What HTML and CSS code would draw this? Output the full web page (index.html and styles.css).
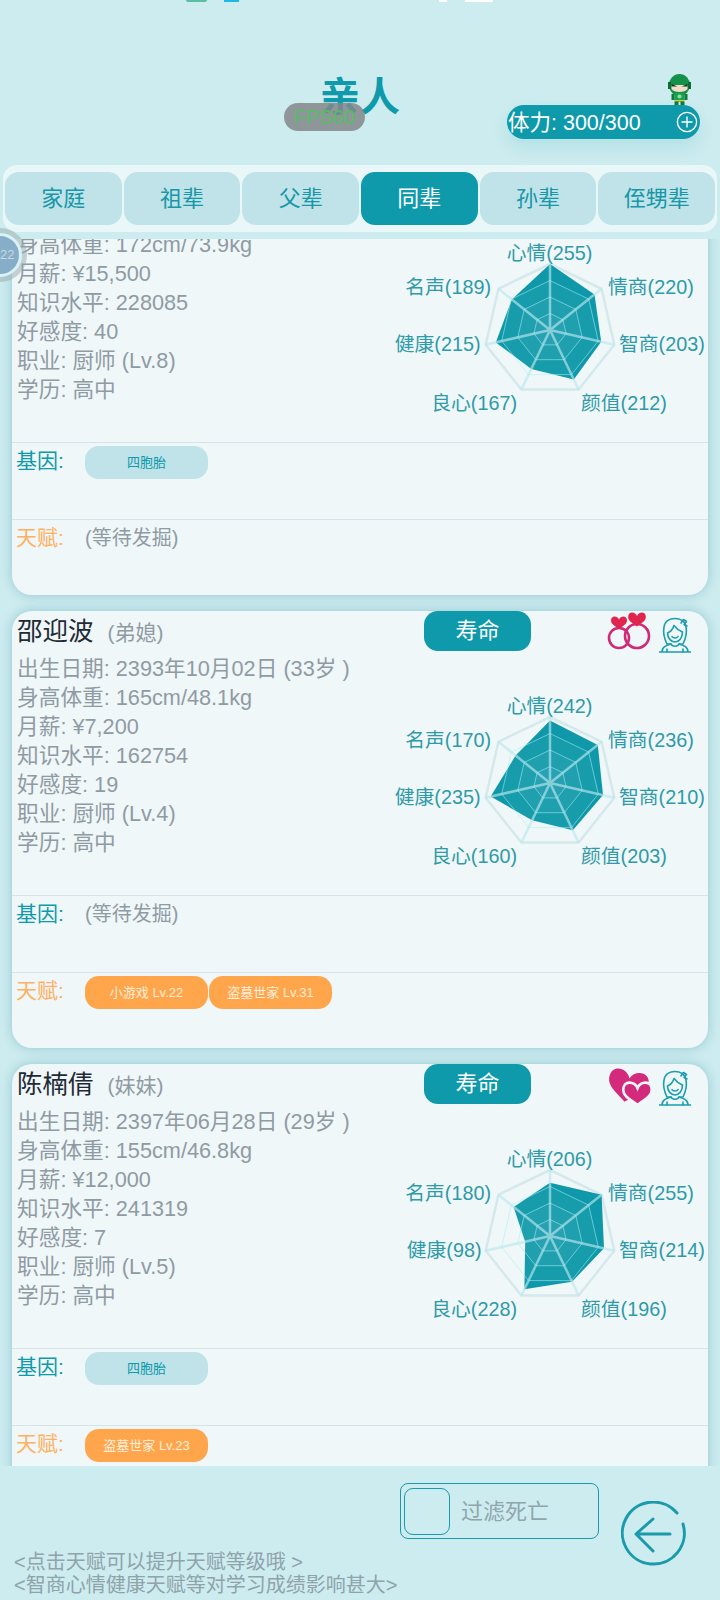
FILE: index.html
```html
<!DOCTYPE html>
<html lang="zh">
<head>
    <meta charset="UTF-8">
    <meta name="viewport" content="width=device-width, initial-scale=1.0">
    <title>亲人</title>
    <link rel="stylesheet" href="styles.css">
</head>
<body>

    <svg class="defs" width="0" height="0">
        <symbol id="radarOuter" viewBox="-66 -66 132 132" overflow="visible">
            <polygon class="ring-outer" points="0,-66 51.6,-41.2 64.3,14.7 28.6,59.5 -28.6,59.5 -64.3,14.7 -51.6,-41.2"/>
        </symbol>
        <g id="radarGrid">
            <polygon class="ring" points="0,-49.5 38.7,-30.9 48.3,11 21.5,44.6 -21.5,44.6 -48.3,11 -38.7,-30.9"/>
            <polygon class="ring" points="0,-33 25.8,-20.6 32.2,7.3 14.3,29.7 -14.3,29.7 -32.2,7.3 -25.8,-20.6"/>
            <polygon class="ring" points="0,-16.5 12.9,-10.3 16.1,3.7 7.2,14.9 -7.2,14.9 -16.1,3.7 -12.9,-10.3"/>
            <path class="spoke" d="M0 0L0 -66M0 0L51.6 -41.2M0 0L64.3 14.7M0 0L28.6 59.5M0 0L-28.6 59.5M0 0L-64.3 14.7M0 0L-51.6 -41.2"/>
        </g>
        <symbol id="heart" viewBox="-8 -2 16 14" overflow="visible">
            <path d="M0 2.500C-1.500 -1.500 -8 -2 -8 3.500C-8 7.500 -3 9.500 0 12C3 9.500 8 7.500 8 3.500C8 -2 1.500 -1.500 0 2.500Z"/>
        </symbol>
        <symbol id="woman" viewBox="0 0 32 36">
            <g fill="none" stroke="#1a9eaf" stroke-width="1.600" stroke-linecap="round" stroke-linejoin="round">
                <path d="M8 27C5 21 4 15 5 10C6 4 11 1.500 16 1.500C21 1.500 26 4 27 10C28 15 27 21 24 27H20"/>
                <path d="M8 27H12"/>
                <path d="M8.500 16C11 15 14 12 15 8.500C18 12.500 21 14 23.500 15C23.500 21 20 25 16 25C12 25 8.500 21 8.500 16Z"/>
                <path d="M13 19.500C14 21.500 18 21.500 19 19.500"/>
                <path d="M0.500 35H31.500M3 35C3 30 7 28.500 12 27C13 30 19 30 20 27C25 28.500 29 30 29 35"/>
                <path d="M8 35V32M24 35V32"/>
                <path d="M22 6L24.500 2.500L27.500 4.500L25 7.500L28 9"/>
            </g>
        </symbol>
    </svg>

    <div class="status-bits">
        <span class="bit bit-green"></span>
        <span class="bit bit-blue"></span>
        <span class="bit bit-white"></span>
        <span class="bit bit-white-long"></span>
    </div>

    <div class="header">
        <div></div>
        <h1 class="title">亲人</h1>
        <div class="energy-box">
            <svg class="hero" viewBox="0 0 24 31">
                <ellipse cx="12" cy="11" rx="10.500" ry="11" fill="#14924a"/>
                <rect x="0.500" y="8" width="3" height="7" fill="#0c6b36"/>
                <rect x="20.500" y="8" width="3" height="7" fill="#0c6b36"/>
                <path d="M4 11H20V15C18 19 6 19 4 15Z" fill="#f4ddc8"/>
                <path d="M4 10L10 12.500H4ZM20 10L14 12.500H20Z" fill="#0b3d22"/>
                <rect x="7" y="19" width="10" height="9" rx="2" fill="#17a350"/>
                <circle cx="12" cy="22.500" r="2" fill="#8fe0a0"/>
                <rect x="4" y="20" width="3" height="6" fill="#0e7a3c"/>
                <rect x="17" y="20" width="3" height="6" fill="#0e7a3c"/>
                <rect x="7" y="26" width="10" height="1.500" fill="#e6c63c"/>
                <rect x="7" y="27.500" width="4" height="3.500" fill="#0e7a3c"/>
                <rect x="13" y="27.500" width="4" height="3.500" fill="#0e7a3c"/>
            </svg>
            <div class="energy">
                <span class="energy-text">体力: 300/300</span>
                <svg class="plus" viewBox="0 0 24 24">
                    <circle cx="12" cy="12" r="10.500"/>
                    <path d="M12 6V18M6 12H18"/>
                </svg>
            </div>
        </div>
        <div class="fps">FPS60</div>
    </div>

    <div class="tabs">
        <div class="tab">家庭</div>
        <div class="tab">祖辈</div>
        <div class="tab">父辈</div>
        <div class="tab active">同辈</div>
        <div class="tab">孙辈</div>
        <div class="tab">侄甥辈</div>
    </div>

    <div class="level-badge"><div class="level-inner">22</div></div>

    <div class="list">

        <div class="card first">
            <div class="card-body">
                <div class="info scrolled">
                    <div>身高体重: 172cm/73.9kg</div>
                    <div>月薪: ¥15,500</div>
                    <div>知识水平: 228085</div>
                    <div>好感度: 40</div>
                    <div>职业: 厨师 (Lv.8)</div>
                    <div>学历: 高中</div>
                </div>
                <svg class="radar" viewBox="0 0 328 243">
                    <g transform="translate(170 130)">
                        <use href="#radarOuter" x="-66" y="-66" width="132" height="132"/>
                        <polygon class="data" points="0,-66 44.5,-35.5 51.2,11.7 23.8,49.5 -18.7,38.9 -54.2,12.4 -38.2,-30.5"/>
                        <use href="#radarGrid"/>
                    </g>
                    <text x="169.500" y="60" text-anchor="middle">心情(255)</text>
                    <text x="228" y="94">情商(220)</text>
                    <text x="239" y="151">智商(203)</text>
                    <text x="201" y="210">颜值(212)</text>
                    <text x="137" y="210" text-anchor="end">良心(167)</text>
                    <text x="100.500" y="151" text-anchor="end">健康(215)</text>
                    <text x="111" y="94" text-anchor="end">名声(189)</text>
                </svg>
            </div>
            <div class="row">
                <div class="row-label gene">基因:</div>
                <div class="chips"><span class="chip chip-gene">四胞胎</span></div>
            </div>
            <div class="row">
                <div class="row-label talent">天赋:</div>
                <div class="row-empty">(等待发掘)</div>
            </div>
        </div>

        <div class="card">
            <div class="card-head">
                <div class="name">邵迎波<span class="relation">(弟媳)</span></div>
                <div class="life-btn">寿命</div>
                <div class="head-icons">
                    <svg class="rel-icon" viewBox="0 0 44 38">
                        <g fill="none" stroke="#cf2a78" stroke-width="2.600">
                            <circle cx="11" cy="24" r="10"/>
                            <circle cx="29" cy="22" r="12"/>
                        </g>
                        <use href="#heart" x="3" y="1" width="16" height="14" fill="#e0264f"/>
                        <use href="#heart" x="20" y="-3" width="18" height="15.500" fill="#e0264f"/>
                    </svg>
                    <svg class="woman-icon"><use href="#woman"/></svg>
                </div>
            </div>
            <div class="card-body">
                <div class="info">
                    <div>出生日期: 2393年10月02日 (33岁 )</div>
                    <div>身高体重: 165cm/48.1kg</div>
                    <div>月薪: ¥7,200</div>
                    <div>知识水平: 162754</div>
                    <div>好感度: 19</div>
                    <div>职业: 厨师 (Lv.4)</div>
                    <div>学历: 高中</div>
                </div>
                <svg class="radar" viewBox="0 0 328 243">
                    <g transform="translate(170 130)">
                        <use href="#radarOuter" x="-66" y="-66" width="132" height="132"/>
                        <polygon class="data" points="0,-62.6 47.8,-38.1 53,12.1 22.8,47.3 -18,37.3 -59.3,13.5 -34.4,-27.4"/>
                        <use href="#radarGrid"/>
                    </g>
                    <text x="169.500" y="60" text-anchor="middle">心情(242)</text>
                    <text x="228" y="94">情商(236)</text>
                    <text x="239" y="151">智商(210)</text>
                    <text x="201" y="210">颜值(203)</text>
                    <text x="137" y="210" text-anchor="end">良心(160)</text>
                    <text x="100.500" y="151" text-anchor="end">健康(235)</text>
                    <text x="111" y="94" text-anchor="end">名声(170)</text>
                </svg>
            </div>
            <div class="row">
                <div class="row-label gene">基因:</div>
                <div class="row-empty">(等待发掘)</div>
            </div>
            <div class="row">
                <div class="row-label talent">天赋:</div>
                <div class="chips">
                    <span class="chip chip-talent">小游戏 Lv.22</span>
                    <span class="chip chip-talent">盗墓世家 Lv.31</span>
                </div>
            </div>
        </div>

        <div class="card">
            <div class="card-head">
                <div class="name">陈楠倩<span class="relation">(妹妹)</span></div>
                <div class="life-btn">寿命</div>
                <div class="head-icons">
                    <svg class="rel-icon" viewBox="0 0 44 38">
                        <use href="#heart" x="0" y="0" width="40" height="35" fill="#d32a7c" transform="rotate(12 20 18)"/>
                        <use href="#heart" x="15" y="13" width="29" height="25" fill="#d32a7c" stroke="#eff7f9" stroke-width="1.500"/>
                    </svg>
                    <svg class="woman-icon"><use href="#woman"/></svg>
                </div>
            </div>
            <div class="card-body">
                <div class="info">
                    <div>出生日期: 2397年06月28日 (29岁 )</div>
                    <div>身高体重: 155cm/46.8kg</div>
                    <div>月薪: ¥12,000</div>
                    <div>知识水平: 241319</div>
                    <div>好感度: 7</div>
                    <div>职业: 厨师 (Lv.5)</div>
                    <div>学历: 高中</div>
                </div>
                <svg class="radar" viewBox="0 0 328 243">
                    <g transform="translate(170 130)">
                        <use href="#radarOuter" x="-66" y="-66" width="132" height="132"/>
                        <polygon class="data" points="0,-53.3 51.6,-41.2 54,12.3 22,45.7 -25.6,53.2 -24.8,5.7 -36.4,-29.1"/>
                        <use href="#radarGrid"/>
                    </g>
                    <text x="169.500" y="60" text-anchor="middle">心情(206)</text>
                    <text x="228" y="94">情商(255)</text>
                    <text x="239" y="151">智商(214)</text>
                    <text x="201" y="210">颜值(196)</text>
                    <text x="137" y="210" text-anchor="end">良心(228)</text>
                    <text x="101.500" y="151" text-anchor="end">健康(98)</text>
                    <text x="111" y="94" text-anchor="end">名声(180)</text>
                </svg>
            </div>
            <div class="row">
                <div class="row-label gene">基因:</div>
                <div class="chips"><span class="chip chip-gene">四胞胎</span></div>
            </div>
            <div class="row">
                <div class="row-label talent">天赋:</div>
                <div class="chips"><span class="chip chip-talent">盗墓世家 Lv.23</span></div>
            </div>
        </div>

    </div>

    <div class="footer">
        <div class="hints">
            <div>&lt;点击天赋可以提升天赋等级哦 &gt;</div>
            <div>&lt;智商心情健康天赋等对学习成绩影响甚大&gt;</div>
        </div>
        <div class="filter">
            <span class="check"></span>
            <span class="filter-text">过滤死亡</span>
        </div>
        <svg class="back" viewBox="0 0 66 66">
            <path d="M56 12A31 31 0 1 0 62 23"/>
            <path d="M49 33H15M32 18L15 33L32 50"/>
        </svg>
    </div>

</body>
</html>
```

FILE: styles.css
```css
* {
    box-sizing: border-box;
}
body {
    margin: 0;
    width: 720px;
    height: 1600px;
    overflow: hidden;
    position: relative;
    font-family: "Liberation Sans", "Noto Sans CJK SC", sans-serif;
    background-color: #cdecef;
    color: #8f9ba3;
}
.defs {
    position: absolute;
}
.status-bits {
    display: flex;
    height: 2px;
    padding-left: 186px;
}
.bit {
    display: block;
    height: 2px;
}
.bit-green {
    width: 21px;
    background: #5cc0a0;
    border-radius: 0 0 6px 6px;
}
.bit-blue {
    width: 15px;
    margin-left: 17px;
    background: #1fb6e8;
}
.bit-white {
    width: 8px;
    margin-left: 200px;
    background: #fff;
}
.bit-white-long {
    width: 28px;
    margin-left: 18px;
    background: #fff;
}

.header {
    position: relative;
    display: grid;
    grid-template-columns: 1fr auto 1fr;
    height: 163px;
}
.title {
    margin: 71px 0 0;
    font-size: 40px;
    line-height: 48px;
    font-weight: 700;
    color: #0e9aab;
}
.energy-box {
    justify-self: end;
    display: flex;
    flex-direction: column;
    align-items: flex-end;
    margin: 72px 20px 0 0;
}
.hero {
    display: block;
    width: 25px;
    height: 31px;
    margin-right: 8px;
}
.energy {
    display: flex;
    align-items: center;
    justify-content: space-between;
    width: 193px;
    height: 34px;
    padding: 0 2px 0 1px;
    border-radius: 17px;
    background: #0e9aab;
    color: #fff;
    font-size: 21.5px;
    box-shadow: 0 8px 18px rgba(14, 154, 171, 0.14);
}
.energy-text {
    padding-bottom: 3px;
}
.plus {
    width: 22px;
    height: 22px;
    fill: none;
    stroke: #fff;
    stroke-width: 1.5;
}
.fps {
    position: absolute;
    left: 284px;
    top: 101px;
    width: 81px;
    height: 28px;
    border-radius: 14px;
    background: rgba(130, 135, 138, 0.85);
    color: #58bb68;
    font-size: 20px;
    line-height: 28px;
    text-align: center;
}

.tabs {
    display: flex;
    gap: 2px;
    height: 67px;
    margin: 0 3px;
    padding: 7px 2px;
    border-radius: 14px;
    background: #eaf7f8;
}
.tab {
    flex: 1;
    display: flex;
    align-items: center;
    justify-content: center;
    padding-bottom: 5px;
    border-radius: 14px;
    background: #bfe3e8;
    color: #1797a8;
    font-size: 22px;
}
.tab.active {
    background: #0e9aab;
    color: #fff;
}

.level-badge {
    position: absolute;
    left: -27px;
    top: 228px;
    z-index: 2;
    display: flex;
    align-items: center;
    justify-content: center;
    width: 54px;
    height: 54px;
    border-radius: 50%;
    background: rgba(150, 170, 175, 0.5);
}
.level-inner {
    width: 44px;
    height: 44px;
    padding-left: 19px;
    border: 3px solid #d9f2f6;
    border-radius: 50%;
    background: #86aec8;
    color: #c4d9e4;
    font-size: 13px;
    line-height: 38px;
    white-space: nowrap;
}

.list {
    height: 1227px;
    margin-top: 7px;
    padding: 0 12px;
    overflow: hidden;
}
.card {
    height: 437px;
    margin-bottom: 16px;
    border-radius: 20px;
    background: #eff7f9;
    box-shadow: 0 0 12px rgba(14, 120, 140, 0.3);
}
.card.first {
    margin-top: -81px;
    padding-top: 42px;
}
.card-head {
    display: flex;
    height: 42px;
}
.name {
    width: 412px;
    padding: 2px 0 0 5px;
    color: #1f2a36;
    font-size: 25.5px;
    line-height: 36px;
}
.relation {
    margin-left: 14px;
    color: #8f9ba3;
    font-size: 21px;
}
.life-btn {
    width: 107px;
    height: 40px;
    border-radius: 14px;
    background: #0e9aab;
    color: #fff;
    font-size: 22px;
    line-height: 40px;
    text-align: center;
}
.head-icons {
    display: flex;
    align-items: flex-start;
    gap: 7px;
    margin-left: auto;
    padding: 3px 17px 0 0;
}
.rel-icon {
    display: block;
    width: 44px;
    height: 38px;
    overflow: visible;
}
.woman-icon {
    display: block;
    width: 32px;
    height: 36px;
    margin-top: 3px;
}
.card-body {
    display: flex;
    height: 243px;
    border-bottom: 1px solid #d5e4e8;
}
.info {
    flex: 1;
    padding: 1px 0 0 5px;
    font-size: 21.7px;
    line-height: 29px;
}
.info.scrolled {
    padding-top: 30px;
}
.radar {
    display: block;
    width: 328px;
    height: 243px;
    overflow: visible;
}
.radar text {
    fill: #2f9aa8;
    font-size: 19.8px;
}
.ring-outer {
    fill: none;
    stroke: #d5e9ec;
    stroke-width: 2.5;
}
.ring {
    fill: rgba(255, 255, 255, 0.04);
    stroke: rgba(170, 240, 245, 0.55);
    stroke-width: 1;
}
.spoke {
    fill: none;
    stroke: rgba(185, 232, 238, 0.65);
    stroke-width: 2.5;
}
.data {
    fill: #0e98a9;
}
.row {
    display: flex;
    height: 77px;
    padding-left: 4px;
    border-bottom: 1px solid #d5e4e8;
}
.row:last-child {
    border-bottom: none;
}
.row-label {
    width: 69px;
    padding-top: 3px;
    font-size: 21px;
    line-height: 29px;
}
.gene {
    color: #0e9aab;
}
.talent {
    color: #ffb060;
}
.row-empty {
    padding-top: 4px;
    font-size: 20px;
    line-height: 29px;
}
.chips {
    display: flex;
    gap: 1px;
    padding-top: 3px;
}
.chip {
    width: 123px;
    height: 33px;
    border-radius: 14px;
    font-size: 13px;
    line-height: 33px;
    text-align: center;
}
.chip-gene {
    background: #bfe3e8;
    color: #0e9aab;
}
.chip-talent {
    background: #ffa64d;
    color: #ffeeda;
}

.footer {
    display: grid;
    grid-template-columns: 1fr auto auto;
    height: 134px;
    padding: 0 33px 3px 14px;
}
.hints {
    align-self: end;
    color: #8fa3aa;
    font-size: 20px;
    line-height: 23px;
}
.filter {
    display: flex;
    align-items: center;
    gap: 11px;
    width: 199px;
    height: 56px;
    margin: 17px 22px 0 0;
    padding-left: 3px;
    border: 1px solid #1a9aab;
    border-radius: 8px;
    color: #8fa6ad;
    font-size: 22px;
}
.filter-text {
    padding-bottom: 5px;
}
.check {
    width: 46px;
    height: 47px;
    border: 1.5px solid #1a9aab;
    border-radius: 9px;
}
.back {
    width: 66px;
    height: 66px;
    margin-top: 35px;
    fill: none;
    stroke: #1a9aab;
    stroke-width: 3;
    stroke-linecap: round;
    stroke-linejoin: round;
}
```
